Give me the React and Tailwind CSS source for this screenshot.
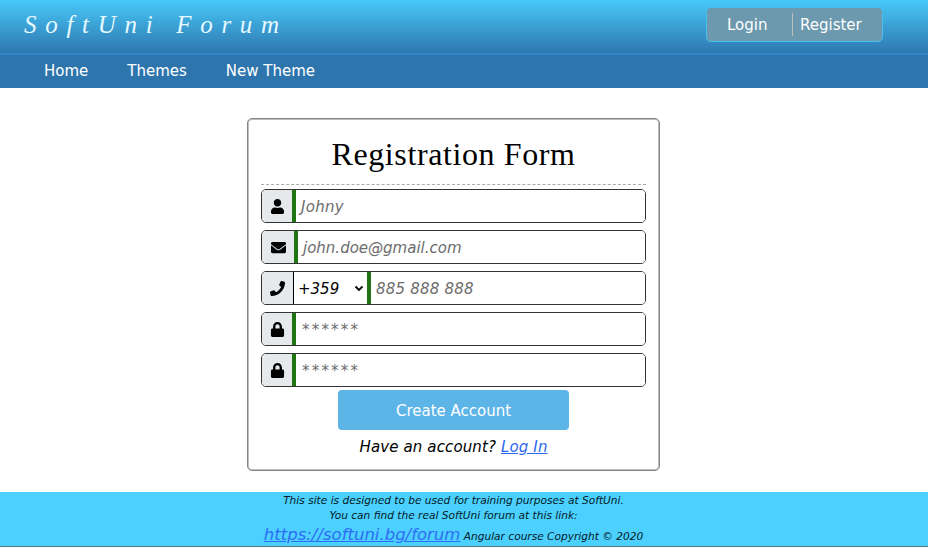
import React from "react";

const ICONS = {
  user: {
    box: "0 0 448 512",
    d: "M224 256c70.7 0 128-57.3 128-128S294.7 0 224 0 96 57.3 96 128s57.3 128 128 128zm89.6 32h-16.7c-22.2 10.2-46.9 16-72.900 16s-50.600-5.800-72.900-16h-16.700C60.200 288 0 348.200 0 422.400V464c0 26.500 21.500 48 48 48h352c26.500 0 48-21.500 48-48v-41.600c0-74.200-60.200-134.400-134.400-134.400z",
  },
  mail: {
    box: "0 0 512 512",
    d: "M502.300 190.800c3.900-3.100 9.700-.2 9.700 4.700V400c0 26.500-21.500 48-48 48H48c-26.500 0-48-21.500-48-48V195.600c0-5 5.700-7.800 9.700-4.700 22.400 17.400 52.100 39.500 154.100 113.600 21.100 15.400 56.700 47.800 92.200 47.600 35.700.3 72-32.800 92.300-47.600 102-74.100 131.600-96.300 154-113.700zM256 320c23.200.4 56.600-29.200 73.400-41.400 132.700-96.300 142.800-104.700 173.400-128.700 5.800-4.500 9.200-11.500 9.200-18.900v-19c0-26.500-21.500-48-48-48H48c-26.500 0-48 21.500-48 48v19c0 7.400 3.400 14.300 9.200 18.900 30.600 23.900 40.700 32.400 173.400 128.700 16.800 12.200 50.200 41.800 73.400 41.400z",
  },
  phone: {
    box: "0 0 512 512",
    d: "M493.400 24.600l-104-24c-11.300-2.600-22.900 3.300-27.500 13.900l-48 112c-4.200 9.800-1.400 21.300 6.900 28l60.600 49.600c-36 76.700-98.900 140.500-177.200 177.200l-49.600-60.600c-6.800-8.300-18.200-11.100-28-6.900l-112 48C3.900 366.500-2 378.100.6 389.400l24 104C27.100 504.200 36.700 512 48 512c256.100 0 464-207.500 464-464 0-11.200-7.700-20.900-18.600-23.400z",
  },
  lock: {
    box: "0 0 448 512",
    d: "M400 224h-24v-72C376 68.200 307.800 0 224 0S72 68.200 72 152v72H48c-26.500 0-48 21.500-48 48v192c0 26.500 21.500 48 48 48h352c26.500 0 48-21.500 48-48V272c0-26.500-21.500-48-48-48zm-104 0H152v-72c0-39.700 32.300-72 72-72s72 32.300 72 72v72z",
  },
};

function Icon({ name }) {
  const icon = ICONS[name];
  return (
    <svg viewBox={icon.box} className="h-[15px] w-[15px]" fill="#000">
      <path d={icon.d} />
    </svg>
  );
}

function Field({ icon, placeholder, badgeClass = "w-[30px]", inputClass = "indent-[5px]", prefix }) {
  return (
    <div className="flex h-[34px] w-full overflow-hidden rounded-[5px] border border-[#333] bg-white">
      <span className={`flex shrink-0 items-center justify-center bg-[#e5e9ec] ${badgeClass}`}>
        <Icon name={icon} />
      </span>
      {prefix}
      <input
        placeholder={placeholder}
        className={`min-w-0 flex-1 border-l-4 border-[#1e7512] bg-white pt-[2px] text-[15px] italic outline-none placeholder:text-[#6c6c6c] ${inputClass}`}
      />
    </div>
  );
}

function CountryCode() {
  return (
    <span className="flex w-[74px] shrink-0 items-center justify-between border-l border-black pr-[3px] pl-1 text-[15px] italic">
      <span className="pt-[2px]">+359</span>
      <svg viewBox="0 0 10 7" className="h-[7px] w-[10px]" fill="none" stroke="#000" strokeWidth="1.8">
        <path d="M1.500 1.500L5 5l3.500-3.500" />
      </svg>
    </span>
  );
}

export default function App() {
  return (
    <div className="flex h-[547px] flex-col overflow-hidden bg-white font-['Verdana','DejaVu_Sans',sans-serif] text-[15px] text-black">
      <header className="flex h-[53px] shrink-0 items-start justify-between bg-linear-to-b from-[#48c9f8] to-[#2e78b0] pr-[45px] pl-[24px]">
        <h1 className="pt-[7px] font-['Snell_Roundhand','Liberation_Serif',serif] text-[25px] leading-[36px] tracking-[8.700px] whitespace-nowrap text-[#e6faff] italic">
          SoftUni Forum
        </h1>
        <div className="mt-[7px] flex h-[35px] w-[177px] items-center rounded-[5px] border border-[#48c1ee] bg-[#6c99ae] text-white">
          <a className="w-[85px] pt-[2px] pl-[20px]">Login</a>
          <a className="flex h-[23px] items-center border-l border-[#b9c0c2] pt-[2px] pl-[7px]">Register</a>
        </div>
      </header>
      <nav className="flex h-[35px] shrink-0 items-center gap-[39px] border-t-2 border-[#3488c8] bg-[#2d75ac] pl-[44px] text-white">
        <a>Home</a>
        <a>Themes</a>
        <a>New Theme</a>
      </nav>

      <main className="flex h-[404px] shrink-0 pt-[30px] pl-[247px]">
        <form className="flex h-[353px] w-[413px] flex-col items-center rounded-[5px] border border-[#858585] px-[13px] pt-px shadow-[inset_0_0_0_1px_#bdbdbd]">
          <h2 className="flex h-[65px] w-full shrink-0 items-center justify-center border-b border-dashed border-[#aaa] pt-[4px] font-['Georgia','Liberation_Serif',serif] text-[32px] tracking-[0.600px] whitespace-nowrap">
            Registration Form
          </h2>
          <div className="flex w-full flex-col gap-[7px] pt-[4px]">
            <Field icon="user" placeholder="Johny" inputClass="indent-[5px] tracking-[0.300px]" />
            <Field icon="mail" placeholder="john.doe@gmail.com" badgeClass="w-[32px]" />
            <Field icon="phone" placeholder="885 888 888" badgeClass="w-[31px]" inputClass="indent-[5px] tracking-[0.200px]" prefix={<CountryCode />} />
            <Field icon="lock" placeholder="******" inputClass="indent-[6px] tracking-[2.200px]" />
            <Field icon="lock" placeholder="******" inputClass="indent-[6px] tracking-[2.200px]" />
          </div>
          <button type="button" className="mt-[3px] h-[40px] w-[231px] shrink-0 rounded-[4px] bg-[#5db4e7] pt-[2px] text-white">
            Create Account
          </button>
          <p className="mt-[6px] leading-[22px] tracking-[0.130px] italic">
            Have an account? <a className="text-[#2b66f0] underline">Log In</a>
          </p>
        </form>
      </main>

      <footer className="h-[55px] shrink-0 border-b border-[#5a7289] bg-[#4bd0ff] pr-[21px] text-center text-[10.600px] text-[#041a26] italic">
        <p className="h-[15px] leading-[17px]">This site is designed to be used for training purposes at SoftUni.</p>
        <p className="h-[15px] leading-[17px]">You can find the real SoftUni forum at this link:</p>
        <p className="leading-[26px]">
          <a className="text-[16.500px] text-[#2f6df6] underline">https://softuni.bg/forum</a> Angular course Copyright © 2020
        </p>
      </footer>
    </div>
  );
}
